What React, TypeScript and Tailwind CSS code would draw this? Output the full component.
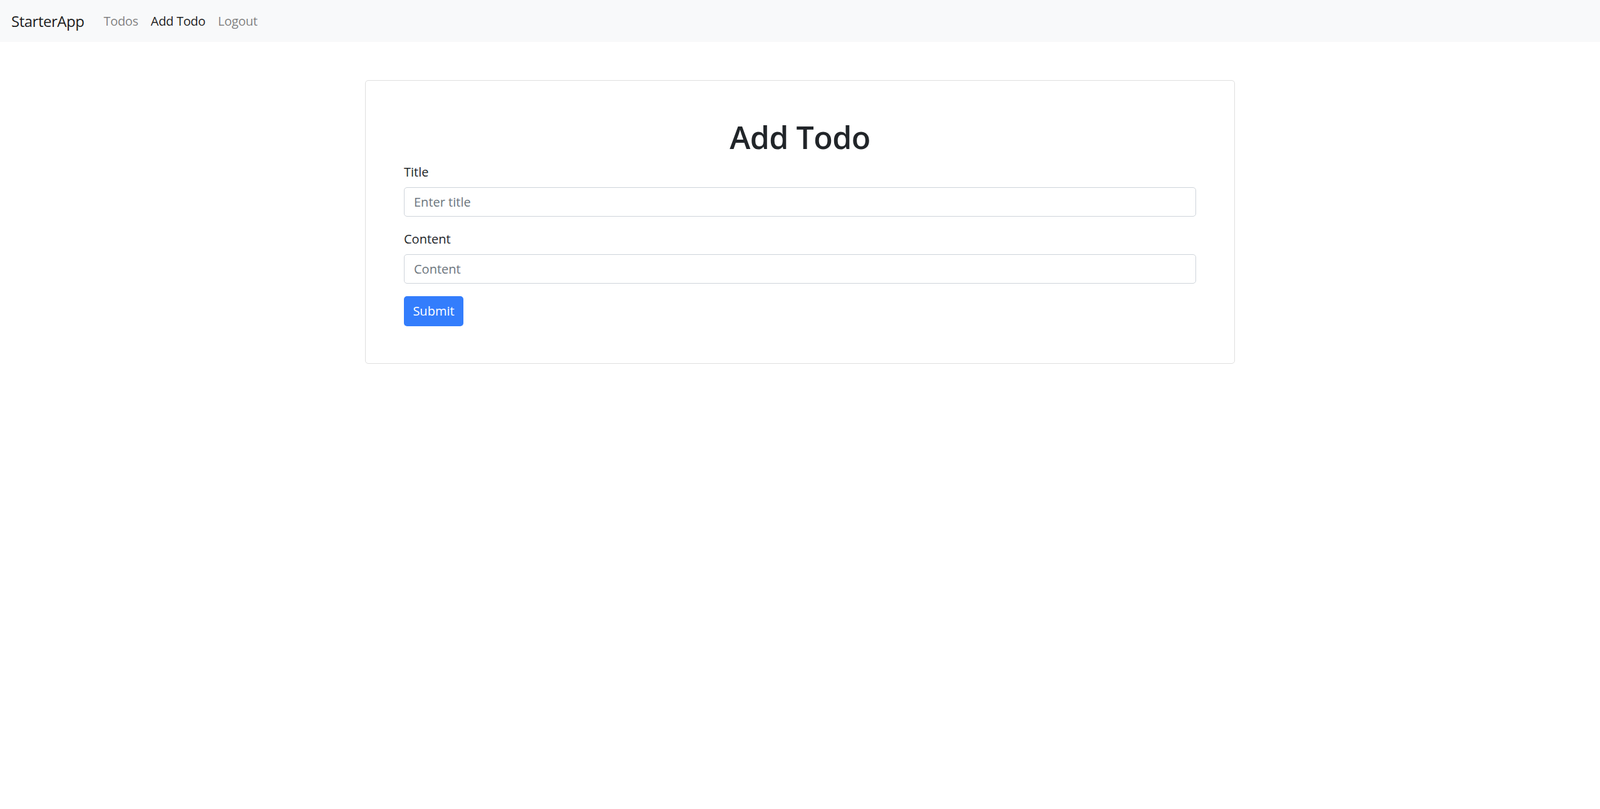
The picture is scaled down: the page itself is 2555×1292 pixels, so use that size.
export default function App() {
  const links = [
    { label: 'Todos', active: false },
    { label: 'Add Todo', active: true },
    { label: 'Logout', active: false },
  ];

  return (
    <div className="min-h-screen bg-white text-[#212529]" style={{ fontFamily: '"Open Sans", "Noto Sans", sans-serif' }}>
      <nav className="h-[67px] bg-[#f8f9fa] flex items-center px-[18px]">
        <a className="text-[24px] leading-[38px] tracking-[-0.02em] text-black/90 mr-[21px]">StarterApp</a>
        <div className="flex items-center">
          {links.map(link => (
            <a key={link.label}
              className={`px-[10px] text-[20px] leading-[30px] tracking-[-0.015em] ${link.active ? 'text-black/90' : 'text-black/50'}`}>
              {link.label}
            </a>
          ))}
        </div>
      </nav>

      <div className="mx-auto mt-[61px] w-[1389px] border border-[#dfdfdf] rounded-[5px] p-[61px] pt-[60px] pb-[59px]">
        <h1 className="text-center text-[50px] leading-[60px] font-semibold tracking-[-0.01em] mb-[10px]">Add Todo</h1>
        <form onSubmit={e => e.preventDefault()}>
          <div className="mb-[20px]">
            <label className="block text-[20px] leading-[30px] pt-[1px] mb-[9px]">Title</label>
            <input type="text" placeholder="Enter title"
              className="w-full h-[47px] px-[15px] text-[20px] border border-[#ced4da] rounded-[5px] placeholder:text-[#6c757d] outline-none" />
          </div>
          <div className="mb-[20px]">
            <label className="block text-[20px] leading-[30px] pt-[1px] mb-[9px]">Content</label>
            <input type="text" placeholder="Content"
              className="w-full h-[47px] px-[15px] text-[20px] border border-[#ced4da] rounded-[5px] placeholder:text-[#6c757d] outline-none" />
          </div>
          <button type="submit"
            className="h-[48px] w-[95px] rounded-[5px] bg-[#337dfc] text-white text-[20px] leading-[30px]">
            Submit
          </button>
        </form>
      </div>
    </div>
  );
}
